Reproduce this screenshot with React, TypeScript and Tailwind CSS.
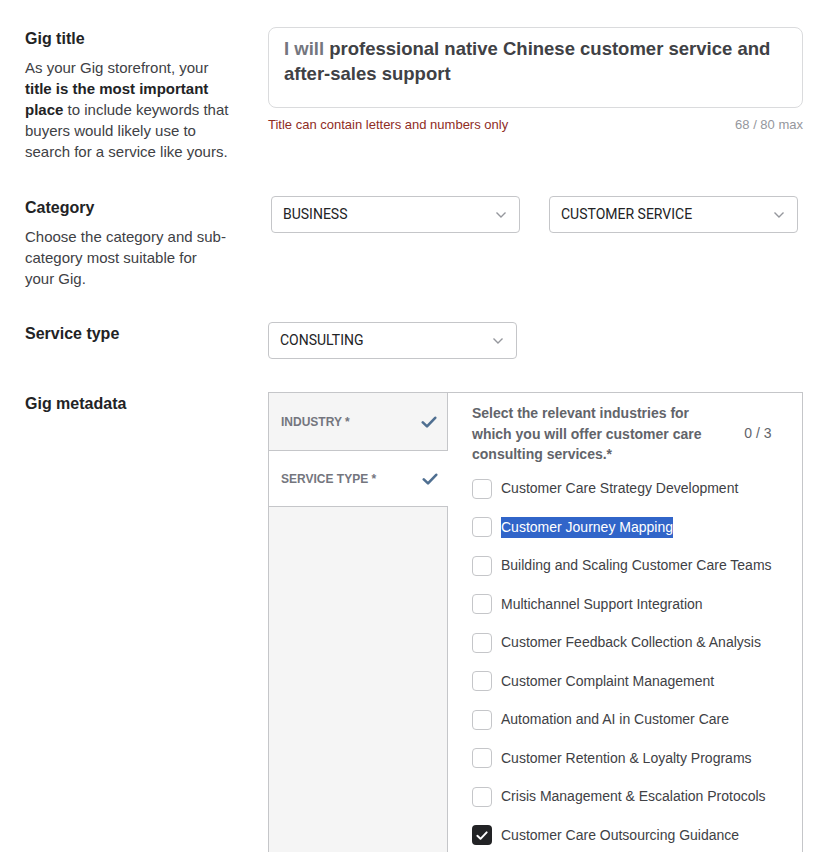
import { ReactNode } from 'react';

const industries = [
  'Customer Care Strategy Development',
  'Customer Journey Mapping',
  'Building and Scaling Customer Care Teams',
  'Multichannel Support Integration',
  'Customer Feedback Collection & Analysis',
  'Customer Complaint Management',
  'Automation and AI in Customer Care',
  'Customer Retention & Loyalty Programs',
  'Crisis Management & Escalation Protocols',
  'Customer Care Outsourcing Guidance',
];

function Chevron() {
  return (
    <svg width="12" height="8" viewBox="0 0 12 8" fill="none" stroke="#95979d" strokeWidth="1.4">
      <path d="M1.5 1.5L6 6l4.5-4.5" />
    </svg>
  );
}

function Tick({ color, size = 14 }: { color: string; size?: number }) {
  return (
    <svg width={size} height={size * 0.75} viewBox="0 0 16 12" fill="none">
      <path d="M1.8 6.4l4.2 4 8.2-8.6" stroke={color} strokeWidth="2.6" strokeLinecap="round" strokeLinejoin="round" />
    </svg>
  );
}

function Select({ value, className = '' }: { value: string; className?: string }) {
  return (
    <div
      className={`flex h-[37px] w-[249px] items-center justify-between rounded-[4px] border border-[#c5c6c9] bg-white pl-[11px] pr-[12px] font-['Roboto',sans-serif] text-[14px] text-[#222325] ${className}`}
    >
      <span>{value}</span>
      <Chevron />
    </div>
  );
}

function Field({
  title,
  desc,
  className = '',
  children,
}: {
  title: string;
  desc?: ReactNode;
  className?: string;
  children: ReactNode;
}) {
  return (
    <div className={`flex ${className}`}>
      <div className="w-[243px] shrink-0 pt-[1px]">
        <h3 className="text-[16px] font-bold leading-[22px] text-[#222325]">{title}</h3>
        {desc && <p className="mt-[7px] text-[15px] leading-[21px] text-[#404145]">{desc}</p>}
      </div>
      <div className="w-[535px]">{children}</div>
    </div>
  );
}

export default function App() {
  return (
    <div className="min-h-[852px] bg-white px-[25px] pt-[27px] font-['Liberation_Sans',Arial,sans-serif]">
      <Field
        title="Gig title"
        desc={
          <>
            As your Gig storefront, your
            <br />
            <b className="text-[#222325]">title is the most important</b>
            <br />
            <b className="text-[#222325]">place</b> to include keywords that
            <br />
            buyers would likely use to
            <br />
            search for a service like yours.
          </>
        }
      >
        <div className="h-[81px] rounded-lg border border-[#dadbdd] px-[15px] pt-[8px] text-[18.5px] font-bold leading-[25px] text-[#404145]">
          <span className="text-[#74767e]">I will</span> professional native Chinese customer service and after-sales support
        </div>
        <div className="mt-[8px] flex justify-between text-[13px] leading-[17px]">
          <span className="text-[#8f2d1f]">Title can contain letters and numbers only</span>
          <span className="text-[#95979d]">68 / 80 max</span>
        </div>
      </Field>

      <Field
        className="mt-[34px]"
        title="Category"
        desc={
          <>
            Choose the category and sub-
            <br />
            category most suitable for
            <br />
            your Gig.
          </>
        }
      >
        <div className="flex gap-[29px] pl-[3px]">
          <Select value="BUSINESS" />
          <Select value="CUSTOMER SERVICE" />
        </div>
      </Field>

      <Field className="mt-[33px]" title="Service type">
        <Select value="CONSULTING" />
      </Field>

      <Field className="mt-[33px]" title="Gig metadata">
        <div className="flex h-[470px] border border-[#c5c6c9]">
          <div className="flex w-[179px] shrink-0 flex-col bg-[#f5f5f5]">
            <div className="flex h-[57px] items-center justify-between border-r border-[#c5c6c9] pl-[12px] pr-[10px] text-[12px] font-bold text-[#74767e]">
              <span>INDUSTRY *</span>
              <Tick color="#4f6f91" size={16} />
            </div>
            <div className="flex h-[57px] items-center justify-between border-y border-[#c5c6c9] bg-white pl-[12px] pr-[10px] text-[12px] font-bold text-[#74767e]">
              <span>SERVICE TYPE *</span>
              <Tick color="#4f6f91" size={16} />
            </div>
            <div className="flex-1 border-r border-[#c5c6c9]" />
          </div>
          <div className="flex-1 pl-[24px] pr-[38px] pt-[10px]">
            <div className="flex items-center justify-between">
              <p className="text-[14px] font-bold leading-[20.5px] text-[#62646a]">
                Select the relevant industries for
                <br />
                which you will offer customer care
                <br />
                consulting services.*
              </p>
              <span className="text-[14px] text-[#62646a]">0 / 3</span>
            </div>
            <ul className="mt-[5px]">
              {industries.map((name, i) => {
                const checked = i === industries.length - 1;
                return (
                  <li key={name} className="flex h-[38.5px] items-center gap-[9px] whitespace-nowrap text-[14px] text-[#404145]">
                    {checked ? (
                      <span className="flex h-[20px] w-[20px] shrink-0 items-center justify-center rounded-[4px] bg-[#222325]">
                        <Tick color="#ffffff" size={12} />
                      </span>
                    ) : (
                      <span className="h-[20px] w-[20px] shrink-0 rounded-[4px] border border-[#c5c6c9] bg-white" />
                    )}
                    {i === 1 ? (
                      <span className="bg-[#3165c9] text-white">{name}</span>
                    ) : (
                      <span>{name}</span>
                    )}
                  </li>
                );
              })}
            </ul>
          </div>
        </div>
      </Field>
    </div>
  );
}
